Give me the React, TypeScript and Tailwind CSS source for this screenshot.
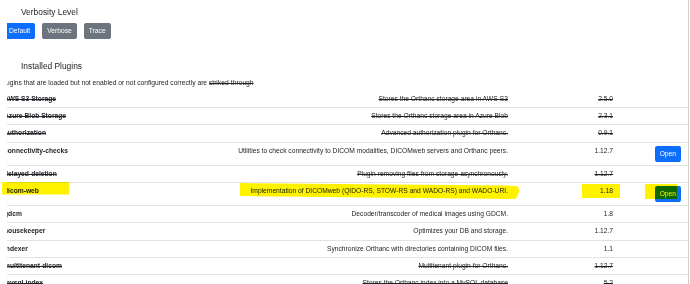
const plugins = [
  { name: "AWS S3 Storage", description: "Stores the Orthanc storage area in AWS-S3", version: "2.5.0", off: true },
  { name: "Azure Blob Storage", description: "Stores the Orthanc storage area in Azure Blob", version: "2.3.1", off: true },
  { name: "authorization", description: "Advanced authorization plugin for Orthanc.", version: "0.9.1", off: true },
  {
    name: "connectivity-checks",
    description: "Utilities to check connectivity to DICOM modalities, DICOMweb servers and Orthanc peers.",
    version: "1.12.7",
    open: true,
  },
  { name: "delayed-deletion", description: "Plugin removing files from storage asynchronously.", version: "1.12.7", off: true },
  {
    name: "dicom-web",
    description: "Implementation of DICOMweb (QIDO-RS, STOW-RS and WADO-RS) and WADO-URI.",
    version: "1.18",
    open: true,
  },
  { name: "gdcm", description: "Decoder/transcoder of medical images using GDCM.", version: "1.8" },
  { name: "housekeeper", description: "Optimizes your DB and storage.", version: "1.12.7" },
  { name: "indexer", description: "Synchronize Orthanc with directories containing DICOM files.", version: "1.1" },
  { name: "multitenant-dicom", description: "Multitenant plugin for Orthanc.", version: "1.12.7", off: true },
  { name: "mysql-index", description: "Stores the Orthanc index into a MySQL database", version: "5.2", off: true },
];

export default function App() {
  return (
    <div className="relative flex h-[284px] w-[690px] overflow-hidden bg-white font-['Liberation_Sans',Arial,sans-serif] text-[#212529]">
      <div className="ml-[7px] w-[681px] overflow-hidden">
        <div className="-ml-[7px] w-[688px] pt-[6px]">
          <h5 className="pl-[21px] text-[8.4px] leading-[12px]">Verbosity Level</h5>
          <div className="mt-[5px] flex gap-[7px] pl-[4px]">
            <button className="h-[16px] rounded-[2px] bg-[#0d6efd] px-[5px] text-[6.7px] text-white">Default</button>
            <button className="h-[16px] rounded-[2px] bg-[#6c757d] px-[5px] text-[6.7px] text-white">Verbose</button>
            <button className="h-[16px] rounded-[2px] bg-[#6c757d] px-[5px] text-[6.7px] text-white">Trace</button>
          </div>

          <h5 className="mt-[20.5px] pl-[21px] text-[8.4px] leading-[12px]">Installed Plugins</h5>
          <p className="mt-[6.5px] whitespace-nowrap text-[6.7px] leading-[10px]">
            Plugins that are loaded but not enabled or not configured correctly are <s>striked-through</s>
          </p>

          <div className="mt-[3px] text-[6.7px] leading-[10px]">
            {plugins.map((p) => (
              <div
                key={p.name}
                className={`flex items-start border-b border-[#e3e3e3] py-[3.1px] ${p.off ? "line-through" : ""}`}
              >
                <div className="w-[230px] pl-[4px] font-bold whitespace-nowrap">{p.name}</div>
                <div className="w-[278px] text-right whitespace-nowrap">{p.description}</div>
                <div className="w-[105px] text-right">{p.version}</div>
                <div className="flex w-[68px] justify-end">
                  {p.open && (
                    <button className="h-[16px] rounded-[2px] bg-[#0d6efd] px-[5px] text-[6.7px] text-white">Open</button>
                  )}
                </div>
              </div>
            ))}
          </div>
        </div>
      </div>
      <div className="w-px bg-[#cfcfcf]" />

      {/* highlighter marks over the dicom-web row */}
      <svg className="pointer-events-none absolute inset-0 mix-blend-multiply" width="690" height="284">
        <g fill="#fff200">
          <rect x="2" y="182" width="67" height="12.5" />
          <path d="M240 183 L517 185.5 Q522 191 515 199 L240 196 Z" />
          <rect x="582" y="184" width="38" height="14" />
          <rect x="645" y="184" width="32" height="15" />
        </g>
      </svg>
    </div>
  );
}
